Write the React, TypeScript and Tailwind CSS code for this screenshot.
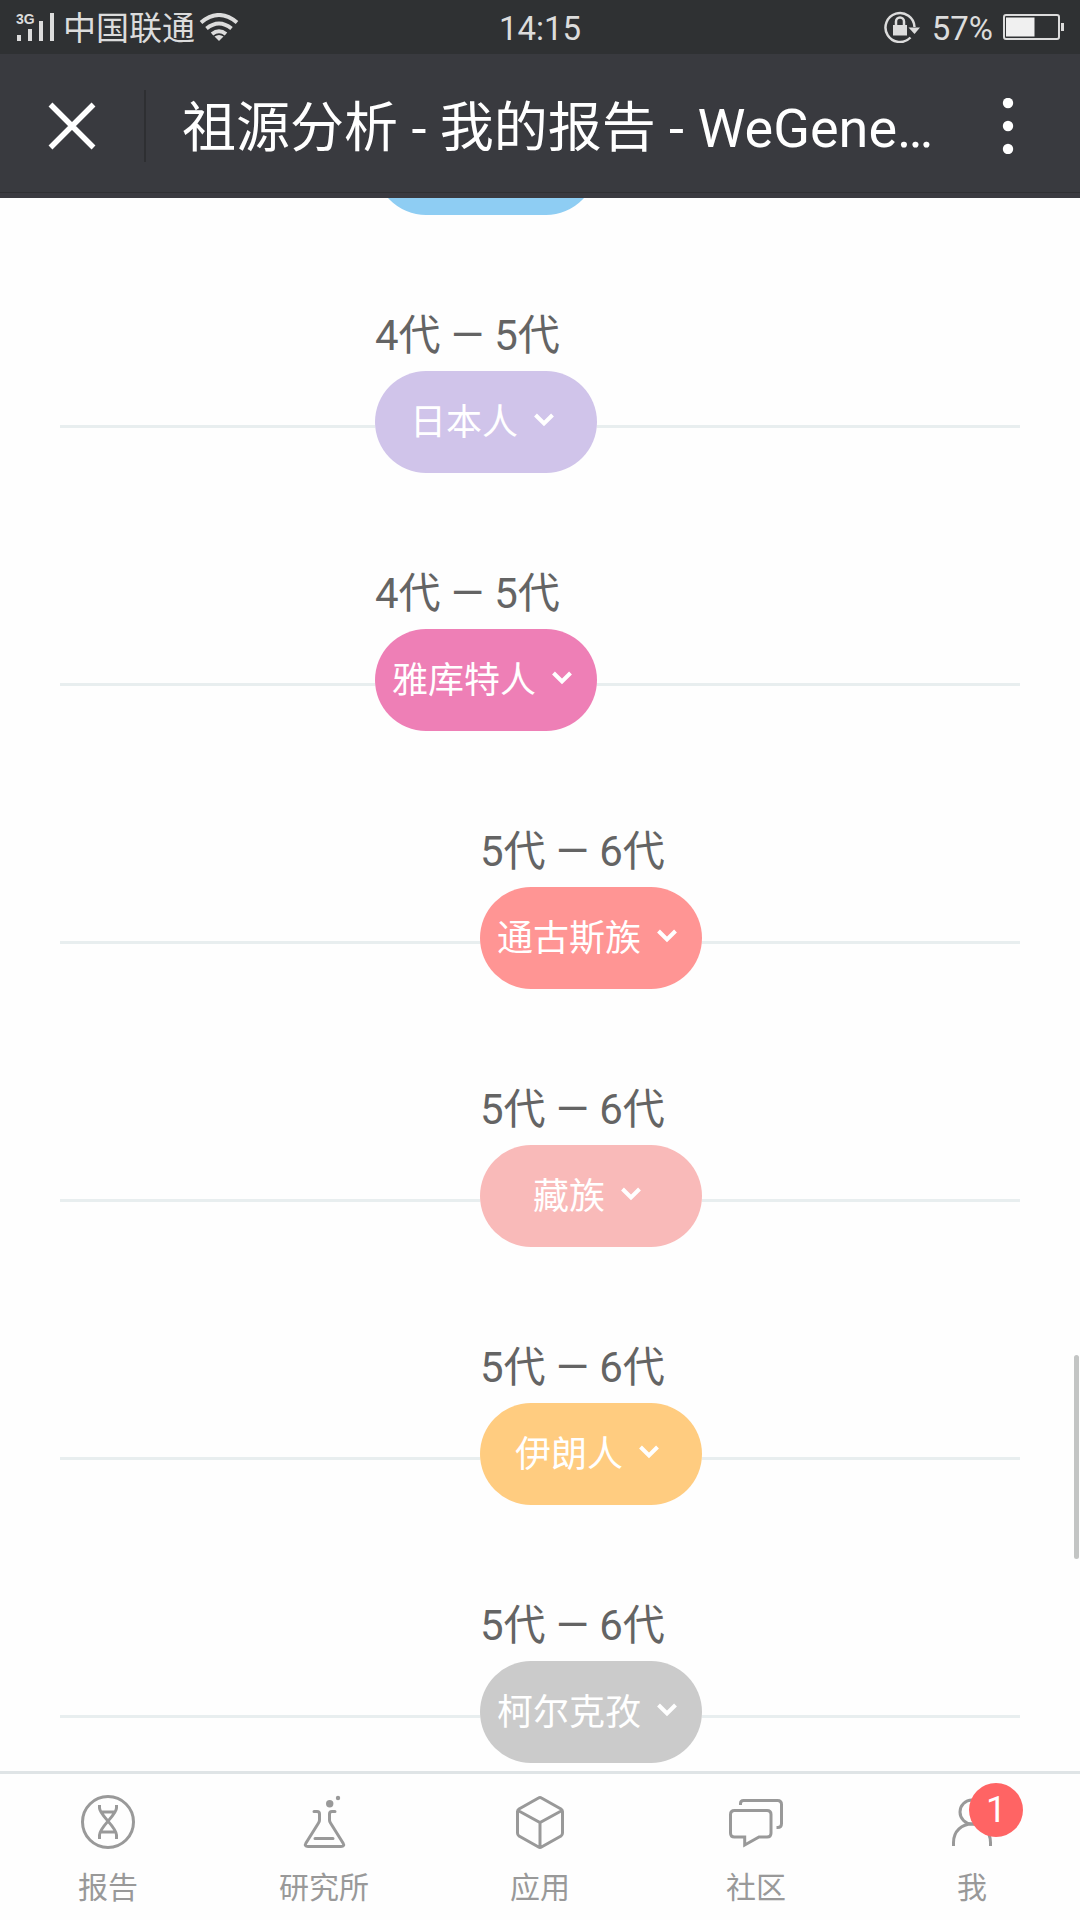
import type { ReactNode } from 'react';
import { clsx } from 'clsx';

type Offset = 'near' | 'far';

interface Ancestor {
  name: string;
  generations?: string;
  offset: Offset;
  color: string;
}

const ancestors: Ancestor[] = [
  { name: '', offset: 'near', color: 'bg-[#8ecdf3]' },
  { name: '日本人', generations: '4代 — 5代', offset: 'near', color: 'bg-[#d0c4ea]' },
  { name: '雅库特人', generations: '4代 — 5代', offset: 'near', color: 'bg-[#ee7fb6]' },
  { name: '通古斯族', generations: '5代 — 6代', offset: 'far', color: 'bg-[#ff9594]' },
  { name: '藏族', generations: '5代 — 6代', offset: 'far', color: 'bg-[#f9bab9]' },
  { name: '伊朗人', generations: '5代 — 6代', offset: 'far', color: 'bg-[#ffcc80]' },
  { name: '柯尔克孜', generations: '5代 — 6代', offset: 'far', color: 'bg-[#cbcbcb]' },
];

export default function App () {
  return (
    <div className="flex h-screen flex-col overflow-hidden bg-[#fefefe] font-[Roboto,'Noto_Sans_CJK_SC',sans-serif]">
      <StatusBar />
      <TitleBar />
      <main className="relative flex min-h-0 flex-1 flex-col justify-end overflow-hidden px-[60px] pb-2">
        {ancestors.map((ancestor, index) => <AncestorRow key={index} {...ancestor} />)}
        <div className="absolute right-px top-[1157px] h-[204px] w-[5px] rounded-full bg-[#c3c5c4]" />
      </main>
      <TabBar />
    </div>
  );
}

function StatusBar () {
  return (
    <div className="grid h-[54px] shrink-0 grid-cols-3 items-center bg-[#2f3133] px-4 text-[33px] leading-[48px] text-[#dcdcdc]">
      <div className="flex items-center">
        <SignalIcon />
        <span className="ml-2 pt-[3px]">中国联通</span>
        <WifiIcon />
      </div>
      <span className="pt-[3px] text-center">14:15</span>
      <div className="flex items-center justify-end">
        <RotationLockIcon />
        <span className="ml-3 pt-[3px]">57%</span>
        <BatteryIcon />
      </div>
    </div>
  );
}

function TitleBar () {
  return (
    <header className="shrink-0 bg-[#3a3a40] pb-[5px] text-white">
      <div className="flex h-[139px] items-center border-b border-[#2f3033] bg-[#393a3f] pt-[6px]">
        <button type="button" aria-label="关闭" className="flex h-[72px] w-36 items-center justify-center">
          <svg className="size-12" viewBox="0 0 48 48" fill="none" stroke="currentColor" strokeWidth="5.5">
            <path d="M2.5 2.5 45.5 45.5M45.5 2.5 2.5 45.5" />
          </svg>
        </button>
        <div className="h-[72px] w-0.5 bg-[#2e2f32]" />
        <h1 className="ml-9 min-w-0 flex-1 truncate pt-[6px] text-[54px] leading-[72px]">祖源分析 - 我的报告 - WeGene…</h1>
        <button type="button" aria-label="更多" className="flex h-[72px] w-36 items-center justify-center">
          <svg className="h-14 w-3" viewBox="0 0 12 56" fill="currentColor">
            <circle cx="6" cy="5" r="5.2" />
            <circle cx="6" cy="28" r="5.2" />
            <circle cx="6" cy="51" r="5.2" />
          </svg>
        </button>
      </div>
    </header>
  );
}

function AncestorRow ({ name, generations, offset, color }: Ancestor) {
  return (
    <section className="flex h-[258px] shrink-0 flex-col justify-end">
      {generations && (
        <h2 className={clsx('mb-[5px] text-[42px] leading-[60px] text-[#646464]', offset === 'near' ? 'ml-[315px]' : 'ml-[420px]')}>
          {generations}
        </h2>
      )}
      <div className="flex items-center">
        <div className={clsx('mt-[9px] h-[3px] bg-[#e8eeef]', offset === 'near' ? 'w-[315px]' : 'w-[420px]')} />
        <button
          type="button"
          aria-label={name || '展开'}
          className={clsx('flex h-[102px] w-[222px] items-center justify-center gap-2 rounded-full text-[36px] leading-[48px] text-white', color)}
        >
          {name && <span className="pt-0.5">{name}</span>}
          {name && <ChevronIcon />}
        </button>
        <div className="mt-[9px] h-[3px] flex-1 bg-[#e8eeef]" />
      </div>
    </section>
  );
}

function TabBar () {
  return (
    <nav className="grid shrink-0 grid-cols-5 border-t-[3px] border-[#dfe4e6] pb-[14px] pt-[21px] text-[#999]">
      <Tab label="报告">
        <circle cx="27" cy="27" r="25.5" />
        <path d="M18.5 10v3c0 7 17 19 17 27v4M35.5 10v3c0 7-17 19-17 27v4M21 17h12M20 37h14" />
      </Tab>
      <Tab label="研究所">
        <path d="M17 16.5h3q2.5 0 2.5 2.5v6q0 1.5-1 3L9 48q-2 3.5 2 3.5h33q4 0 2-3.5L33.5 28q-1-1.5-1-3v-6q0-2.5 2.5-2.5h3M18 43.5h18" strokeLinecap="round" />
        <g fill="currentColor" stroke="none">
          <circle cx="32.7" cy="8.7" r="3.7" />
          <circle cx="41" cy="3" r="2.2" />
        </g>
      </Tab>
      <Tab label="应用">
        <path d="M25.5 3q1.5-1 3 0L48 14q1.5 1 1.5 2.5V38q0 2-1.5 3L28.5 52q-1.5 1-3 0L6 41q-1.5-1-1.5-3V16.5Q4.5 15 6 14ZM5 15.5 27 27.5l22-12M27 27.5V52" />
      </Tab>
      <Tab label="社区">
        <path d="M5.5 15.5h32.5q4 0 4 4v18.5q0 4-4 4h-8L15.7 50v-8H5.5q-4 0-4-4V19.5q0-4 4-4ZM11.5 10V8.500q0-3 3-3h34q4 0 4 4v19q0 4-4 4h-1" />
      </Tab>
      <Tab label="我" badge={1}>
        <circle cx="27" cy="17" r="12" />
        <path d="M8.5 51v-3.5C8.5 36 17 29 27 29s18.5 7 18.5 18.5V51" />
      </Tab>
    </nav>
  );
}

function Tab ({ label, badge, children }: { label: string, badge?: number, children: ReactNode }) {
  return (
    <a href="#" className="flex flex-col items-center">
      <span className="relative">
        <svg className="block size-[54px] overflow-visible" viewBox="0 0 54 54" fill="none" stroke="currentColor" strokeWidth="3">
          {children}
        </svg>
        {badge != null && (
          <span className="absolute -right-6 -top-3 size-[54px] rounded-full bg-[#ff6464] text-center text-[36px] leading-[54px] text-white">
            {badge}
          </span>
        )}
      </span>
      <span className="mt-[21px] text-[30px] leading-9">{label}</span>
    </a>
  );
}

function ChevronIcon () {
  return (
    <svg className="size-9" viewBox="0 0 36 36" fill="none" stroke="currentColor" strokeWidth="4">
      <path d="M9.5 11 18 19.5l8.5-8.5" />
    </svg>
  );
}

function SignalIcon () {
  return (
    <span className="relative h-[54px] w-[39px]">
      <svg className="h-[54px] w-[39px]" viewBox="0 0 39 54" fill="currentColor">
        <path d="M1 35h4v6H1zM12 29h4v12h-4zM23 21h4v20h-4zM34 13h4v28h-4z" />
      </svg>
      <span className="absolute left-0 top-3 font-['Liberation_Sans',sans-serif] text-sm font-bold leading-[14px]">3G</span>
    </span>
  );
}

function WifiIcon () {
  return (
    <svg className="ml-1 h-7 w-10" viewBox="0 0 40 28" fill="none" stroke="currentColor" strokeWidth="4">
      <path d="M2 9.5Q20-5.5 38 9.5M7.5 15.5q12.5-10 25 0M13 21q7-5.5 14 0" />
      <path d="M15.5 23.5q4.5-3 9 0L20 28Z" fill="currentColor" stroke="none" />
    </svg>
  );
}

function RotationLockIcon () {
  return (
    <svg className="h-8 w-9" viewBox="0 0 36 32" fill="none" stroke="currentColor" strokeWidth="2.5">
      <path d="M26.5 26.5A14.5 14.5 0 1 1 30.5 16" />
      <path d="M24.5 16.5h11.5l-5.5 6.5Z" fill="currentColor" stroke="none" />
      <path d="M9 14h14v10.5H9z" fill="currentColor" stroke="none" />
      <path d="M12 15v-4.500a4 4 0 0 1 8 0V15" />
    </svg>
  );
}

function BatteryIcon () {
  return (
    <svg className="ml-2.5 h-7 w-[61px]" viewBox="0 0 61 28" fill="none" stroke="currentColor" strokeWidth="2">
      <rect x="1" y="2" width="55" height="24" rx="2" />
      <path d="M3 4.5h28.5v19H3z" fill="#f0f0f0" stroke="none" />
      <path d="M58 10h3v8h-3z" fill="currentColor" stroke="none" />
    </svg>
  );
}
